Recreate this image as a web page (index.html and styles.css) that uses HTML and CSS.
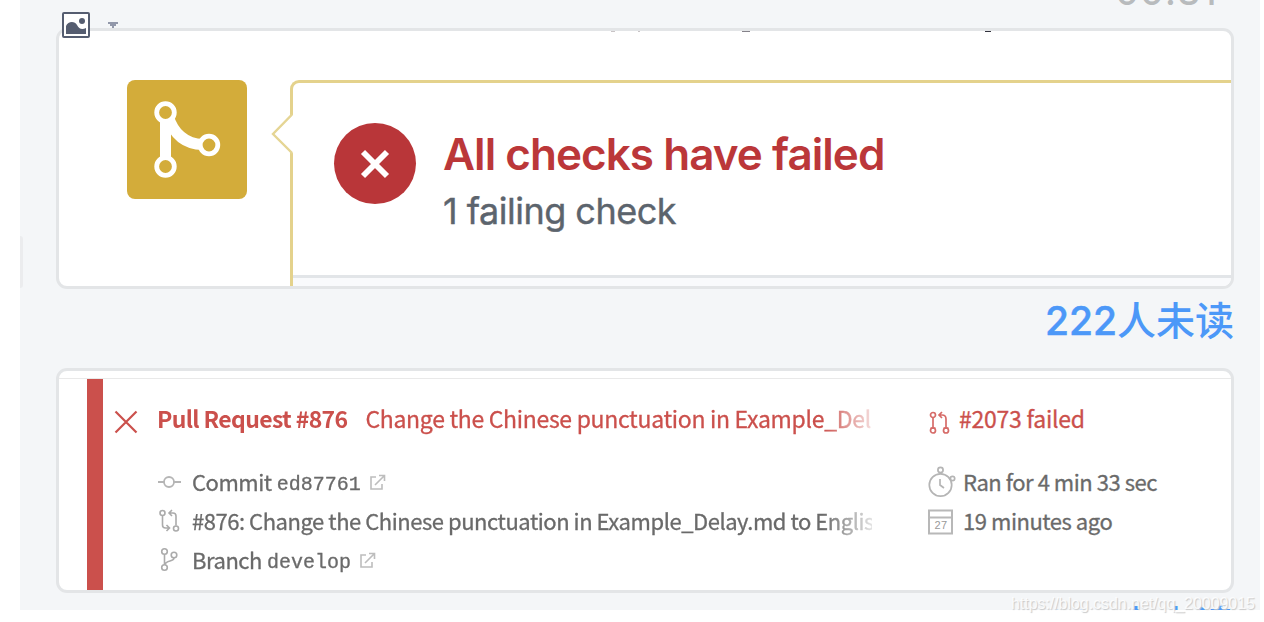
FILE: index.html
```html
<!DOCTYPE html>
<html lang="zh">
<head>
    <meta charset="UTF-8">
    <meta name="viewport" content="width=device-width, initial-scale=1.0">
    <title>Chat</title>
    <link rel="stylesheet" href="styles.css">
</head>
<body>

<div class="chat">
    <div class="time">00:31</div>
    <div class="side-tab"></div>

    <div class="toolbar">
        <svg width="28" height="26" viewBox="0 0 28 26">
            <rect x="1" y="1" width="26" height="24" rx="1" fill="#fff" stroke="#555d70" stroke-width="2"/>
            <circle cx="20" cy="9" r="3" fill="#555d70"/>
            <path d="M4 22V14C6 9 13 9 15 13C17 17 20 18 24 16V22Z" fill="#555d70"/>
        </svg>
        <svg class="caret" width="10" height="6" viewBox="0 0 10 6">
            <path d="M0 0H10V2H8V4H6V6H4V4H2V2H0Z" fill="#9298aa"/>
        </svg>
    </div>

    <div class="card checks">
        <svg class="cut" width="400" height="2" viewBox="0 0 400 2">
            <path d="M1 0H5V1H1ZM28 0H30V1H28Z" fill="#c9c4c6"/>
            <path d="M132 0H140V1H132Z" fill="#85828a"/>
            <path d="M375 0H381V1H375Z" fill="#33333d"/>
        </svg>
        <div class="merge">
            <svg width="120" height="119" viewBox="0 0 120 119">
                <path d="M38.500 38V80" stroke="#fff" stroke-width="11"/>
                <path d="M41 36C46 52 56 64 76 64.500" fill="none" stroke="#fff" stroke-width="11"/>
                <g fill="#d3ac3a" stroke="#fff" stroke-width="4.800">
                    <circle cx="38.500" cy="32.500" r="8.800"/>
                    <circle cx="38.500" cy="86.500" r="8.800"/>
                    <circle cx="82" cy="65" r="8.800"/>
                </g>
            </svg>
        </div>
        <div class="panel">
            <svg class="arrow" width="22" height="40" viewBox="0 0 22 40">
                <path d="M20 1L2 20L20 39H22V1Z" fill="#fff"/>
                <path d="M20.500 0V1L2 20L20.500 38.500V40" fill="none" stroke="#e5d594" stroke-width="2.400"/>
            </svg>
            <div class="panel-body">
                <div class="fail-icon">
                    <svg width="82" height="82" viewBox="0 0 82 82">
                        <path d="M29 29L53 53M53 29L29 53" stroke="#fff" stroke-width="5.800"/>
                    </svg>
                </div>
                <div>
                    <h1>All checks have failed</h1>
                    <p>1 failing check</p>
                </div>
            </div>
            <div class="panel-foot"></div>
        </div>
    </div>
    <div class="unread"><span>222</span>人未读</div>

    <div class="card build">
        <div class="build-inner">
            <div class="bar"></div>
            <svg class="cross" width="24" height="24" viewBox="0 0 24 24">
                <path d="M1.500 1.500L22.500 22.500M22.500 1.500L1.500 22.500" stroke="#cb504c" stroke-width="2.200"/>
            </svg>
            <div class="main">
                <div class="title"><b>Pull Request #876</b><span class="subject">Change the Chinese punctuation in Example_Delay.md</span></div>
                <div class="row">
                    <svg width="35" height="26" viewBox="0 0 35 26">
                        <path d="M1 13H7M17 13H24" stroke="#b5b5b5" stroke-width="2"/>
                        <circle cx="12" cy="13" r="5" fill="none" stroke="#b5b5b5" stroke-width="1.800"/>
                    </svg>
                    <span>Commit</span><code>ed87761</code>
                    <svg class="ext" width="16" height="16" viewBox="0 0 16 16">
                        <path d="M6 3H1V15H12V10M5 11L14 2M9 1.500H14.500V7" fill="none" stroke="#bdbdbd" stroke-width="1.600"/>
                    </svg>
                </div>
                <div class="row">
                    <svg width="35" height="26" viewBox="0 0 35 26">
                        <g fill="none" stroke="#ababab" stroke-width="1.600">
                            <circle cx="5.500" cy="5" r="2.500"/>
                            <circle cx="19" cy="20.500" r="2.500"/>
                            <path d="M5.500 8V17Q5.500 20 8.500 20H12.500M9.500 17L12.500 20L9.500 23M19 17.500V8Q19 5 16 5H13M15 2L12 5L15 8"/>
                        </g>
                    </svg>
                    <span>#876: Change the Chinese punctuation in Example_Delay.md to English</span>
                </div>
                <div class="row">
                    <svg width="35" height="26" viewBox="0 0 35 26">
                        <g fill="none" stroke="#ababab" stroke-width="1.600">
                            <circle cx="7.500" cy="4.500" r="2.800"/>
                            <circle cx="7.500" cy="20.500" r="2.800"/>
                            <circle cx="17" cy="8" r="2.800"/>
                            <path d="M7.500 7.500V17.500M17 11C17 15 9 13 8 17.500"/>
                        </g>
                    </svg>
                    <span>Branch</span><code>develop</code>
                    <svg class="ext" width="16" height="16" viewBox="0 0 16 16">
                        <path d="M6 3H1V15H12V10M5 11L14 2M9 1.500H14.500V7" fill="none" stroke="#bdbdbd" stroke-width="1.600"/>
                    </svg>
                </div>
            </div>
            <div class="side">
                <div class="title">
                    <svg class="pr" width="31" height="24" viewBox="0 0 31 24">
                        <g fill="none" stroke="#d66b68" stroke-width="1.700">
                            <circle cx="5" cy="4" r="2.500"/>
                            <circle cx="5" cy="19.500" r="2.500"/>
                            <circle cx="18" cy="19.500" r="2.500"/>
                            <path d="M5 7V17M18 17V8Q18 4 14 4H11M14 1L11 4L14 7M2.500 17H7.500M15.500 17H20.500"/>
                        </g>
                    </svg>
                    <span>#2073 failed</span>
                </div>
                <div class="row">
                    <svg width="35" height="32" viewBox="0 0 35 32">
                        <g fill="none" stroke="#b5b5b5" stroke-width="1.700">
                            <circle cx="12.500" cy="19" r="11.200"/>
                            <circle cx="12.500" cy="4" r="2.600"/>
                            <circle cx="24.500" cy="12.500" r="2.200"/>
                            <path d="M12.500 6.500V8M21 13L23 12M12 13V19L16 22"/>
                        </g>
                    </svg>
                    <span>Ran for 4 min 33 sec</span>
                </div>
                <div class="row">
                    <svg class="calendar" width="35" height="26" viewBox="0 0 35 26">
                        <path d="M1 1.500H24V24.500H1ZM1 8.500H24" fill="none" stroke="#b8b8b8" stroke-width="2"/>
                        <text class="day" x="6.500" y="20">27</text>
                    </svg>
                    <span>19 minutes ago</span>
                </div>
            </div>
        </div>
    </div>
    <div class="unread"><span>222</span>人未读</div>
</div>
<div class="watermark">https://blog.csdn.net/qq_20009015</div>

</body>
</html>
```
FILE: styles.css
```css
* {
    box-sizing: border-box;
}

body {
    margin: 0;
    height: 622px;
    overflow: hidden;
    background: #fff;
    font-family: Inter, "Noto Sans CJK SC", sans-serif;
}

svg {
    display: block;
    flex: none;
}

.chat {
    position: relative;
    width: 1240px;
    height: 610px;
    margin-left: 20px;
    padding: 28px 26px 0 36px;
    background: #f4f6f8;
    overflow: hidden;
}

/* timestamp scrolled half out of view */
.time {
    position: absolute;
    top: -35px;
    right: 42px;
    font-size: 36px;
    line-height: 54px;
    font-weight: 500;
    letter-spacing: 1.5px;
    color: #b8bbbd;
}

.side-tab {
    position: absolute;
    left: 0;
    top: 236px;
    width: 3px;
    height: 52px;
    border-radius: 0 3px 3px 0;
    background: #ebecee;
}

.toolbar {
    position: absolute;
    left: 42px;
    top: 12px;
    display: flex;
    gap: 18px;
    z-index: 2;
}

.caret {
    margin-top: 10px;
}

.card {
    background: #fff;
    border: 3px solid #e3e5e7;
    border-radius: 11px;
    overflow: hidden;
}

.checks {
    position: relative;
    display: flex;
    height: 261px;
    padding: 49px 0 0 68px;
}

.cut {
    position: absolute;
    left: 551px;
    top: 0;
}

.merge {
    flex: none;
    width: 120px;
    height: 119px;
    border-radius: 8px;
    background: #d3ac3a;
}

.panel {
    position: relative;
    display: flex;
    flex-direction: column;
    flex: 1;
    margin-left: 43px;
    border: solid #e4d28c;
    border-width: 3px 0 0 3px;
    border-top-left-radius: 9px;
}

.arrow {
    position: absolute;
    left: -22px;
    top: 31px;
}

.panel-body {
    display: flex;
    gap: 27px;
    height: 192px;
    padding: 40px 0 0 41px;
}

.fail-icon {
    width: 82px;
    height: 81px;
    border-radius: 50%;
    background: #b93639;
}

h1 {
    margin: 4px 0 0;
    font-size: 44px;
    line-height: 54px;
    font-weight: 600;
    letter-spacing: -0.95px;
    color: #bb3739;
    white-space: nowrap;
}

p {
    margin: 7px 0 0;
    font-size: 36px;
    line-height: 46px;
    letter-spacing: -0.5px;
    color: #5c646d;
    -webkit-text-stroke: 0.4px #5c646d;
}

.panel-foot {
    flex: 1;
    border-top: 3px solid #e2e5e8;
    background: #f9fafc;
}

.unread {
    height: 79px;
    padding-top: 3px;
    font-size: 39px;
    line-height: 58px;
    font-weight: 500;
    text-align: right;
    color: #4c98f8;
}

.unread span {
    -webkit-text-stroke: 0.5px #4c98f8;
}

.build {
    height: 225px;
    padding-top: 7px;
    font-family: "Noto Sans CJK SC", "Noto Sans", sans-serif;
}

.build-inner {
    display: flex;
    height: 212px;
    border-top: 1px solid #e9e9e9;
}

.bar {
    width: 16px;
    margin-left: 28px;
    background: #cb504c;
}

.cross {
    margin: 31px 0 0 11px;
}

.main {
    width: 715px;
    margin-left: 19px;
    overflow: hidden;
    -webkit-mask-image: linear-gradient(to right, #000 665px, transparent 727px);
    mask-image: linear-gradient(to right, #000 665px, transparent 727px);
}

.title {
    display: flex;
    align-items: center;
    height: 40px;
    margin: 19px 0 24px;
    font-size: 23px;
    line-height: 40px;
    letter-spacing: -0.31px;
    color: #cb504c;
    white-space: nowrap;
    -webkit-text-stroke: 0.3px #cb504c;
}

.title b {
    letter-spacing: -0.64px;
    -webkit-text-stroke: 0;
}

.subject {
    margin-left: 18px;
}

.side .title {
    letter-spacing: -0.25px;
}

.pr {
    margin-top: 9px;
}

.row {
    display: flex;
    align-items: center;
    height: 39px;
    font-size: 22px;
    line-height: 39px;
    letter-spacing: -0.46px;
    color: #6a6a6a;
    white-space: nowrap;
    -webkit-text-stroke: 0.3px #6a6a6a;
}

.row svg {
    -webkit-text-stroke: 0;
}

code {
    margin-left: 5px;
    padding-top: 5px;
    font-family: "Liberation Mono", monospace;
    font-size: 20px;
    letter-spacing: 0;
}

.ext {
    margin-left: 9px;
}

.side {
    margin-left: 56px;
}

.calendar {
    margin-top: 2px;
}

.day {
    font-family: "Liberation Sans", sans-serif;
    font-size: 11px;
    letter-spacing: 0.5px;
    fill: #999;
}

.watermark {
    position: absolute;
    left: 1011px;
    top: 594px;
    font-family: "Liberation Sans", Arial, sans-serif;
    font-size: 16px;
    line-height: 20px;
    letter-spacing: -0.05px;
    color: rgba(255, 255, 255, 0.85);
    text-shadow: 1px 1px 1px #c8c8c8;
}
```
